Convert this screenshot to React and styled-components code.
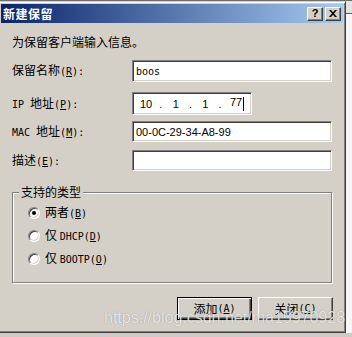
import React from 'react';
import styled, { createGlobalStyle } from 'styled-components';

const cjk = `"Noto Sans CJK SC", "Noto Sans", sans-serif`;
const mono = `"DejaVu Sans Mono", "Liberation Mono", monospace`;
const face = '#d4d0c8';

const GlobalStyle = createGlobalStyle`
  html, body { margin: 0; padding: 0; background: #f4f4f4; }
  body { font-family: ${cjk}; font-size: 12px; color: #000; }
`;

const Screen = styled.div`
  position: relative;
  width: 352px;
  height: 337px;
  overflow: hidden;
  background: linear-gradient(to bottom,
    #6f6f6f 0, #6f6f6f 1px,
    #e2e2e2 1px, #e2e2e2 13px,
    #5a5a5a 13px, #5a5a5a 14px,
    #f6f6f6 14px, #f6f6f6 333px,
    #cfcbc4 333px);
`;

const Dialog = styled.div`
  box-sizing: border-box;
  width: 348px;
  height: 332px;
  margin: 1px 0 0 -2px;
  padding: 2px;
  background: ${face};
  border: 1px solid;
  border-color: ${face} #404040 #404040 ${face};
  box-shadow: inset 1px 1px #fff, inset -1px -1px #808080;
  display: flex;
  flex-direction: column;
`;

const TitleBar = styled.div`
  height: 19px;
  display: flex;
  align-items: center;
  padding: 0 2px;
  background: linear-gradient(to right, #0a246a, #a6caf0);
`;

const TitleText = styled.div`
  flex: 1;
  color: #fff;
  font-weight: bold;
  font-size: 12px;
  letter-spacing: 0.5px;
  line-height: 19px;
`;

const CaptionButton = styled.div`
  box-sizing: border-box;
  width: 16px;
  height: 14px;
  margin-left: 2px;
  background: ${face};
  border: 1px solid;
  border-color: #fff #404040 #404040 #fff;
  box-shadow: inset -1px -1px #808080;
  display: flex;
  align-items: center;
  justify-content: center;
  font-family: "Liberation Sans", sans-serif;
  font-weight: bold;
  font-size: 11px;
  line-height: 1;
`;

const Body = styled.div`
  position: relative;
  flex: 1;
  display: flex;
  flex-direction: column;
  padding: 12px 11px 0 11px;
`;

const Intro = styled.div`
  height: 14px;
  line-height: 14px;
`;

const Form = styled.div`
  margin-top: 11px;
  display: flex;
  flex-direction: column;
`;

const Row = styled.div`
  display: grid;
  grid-template-columns: 120px auto;
  align-items: center;
  height: ${p => p.$h}px;
  margin-top: ${p => p.$top || 0}px;
`;

const Label = styled.div`
  line-height: 14px;
  white-space: nowrap;
`;

const Lat = styled.span`
  font-family: ${mono};
  font-size: 10px;
`;

const Edit = styled.div`
  box-sizing: border-box;
  width: ${p => p.$w}px;
  height: 100%;
  background: #fff;
  border: 1px solid;
  border-color: #808080 #fff #fff #808080;
  box-shadow: inset 1px 1px #404040, inset -1px -1px ${face};
  padding: 0 3px;
  display: flex;
  align-items: center;
  font-family: ${p => (p.$mono ? mono : '"Liberation Sans", Arial, sans-serif')};
  font-size: ${p => (p.$mono ? 10 : 11)}px;
  white-space: pre;
`;

const Octet = styled.span`
  width: 19px;
  text-align: ${p => p.$align || 'center'};
  padding-left: ${p => p.$pl || 0}px;
`;

const Dot = styled.span`
  width: 12px;
  text-align: center;
`;

const Caret = styled.span`
  display: inline-block;
  width: 1px;
  height: 14px;
  vertical-align: middle;
  background: #000;
  margin-left: 1px;
`;

const Group = styled.div`
  position: relative;
  box-sizing: border-box;
  margin-top: 21px;
  height: 91px;
  border: 1px solid #808080;
  box-shadow: inset 1px 1px #fff, 1px 1px #fff;
  padding: 8px 0 0 15px;
`;

const Legend = styled.div`
  position: absolute;
  top: -8px;
  left: 6px;
  padding: 0 2px;
  background: ${face};
  line-height: 14px;
`;

const Option = styled.div`
  height: 23px;
  display: flex;
  align-items: center;
  gap: 5px;
  line-height: 14px;
`;

const Radio = styled.span`
  box-sizing: border-box;
  width: 12px;
  height: 12px;
  border-radius: 50%;
  background: #fff;
  border: 1px solid;
  border-color: #808080 #fff #fff #808080;
  box-shadow: inset 1px 1px #404040, inset -1px -1px ${face};
  display: flex;
  align-items: center;
  justify-content: center;

  &::after {
    content: '';
    width: 4px;
    height: 4px;
    border-radius: 50%;
    background: ${p => (p.$checked ? '#000' : 'transparent')};
  }
`;

const Buttons = styled.div`
  margin-top: 14px;
  margin-right: -1px;
  display: flex;
  justify-content: flex-end;
  gap: 6px;
`;

const Button = styled.div`
  box-sizing: border-box;
  width: 75px;
  height: 23px;
  background: ${face};
  border: 1px solid;
  border-color: ${p => (p.$default ? '#000' : '#fff #404040 #404040 #fff')};
  box-shadow: ${p =>
    p.$default
      ? 'inset 1px 1px #fff, inset -1px -1px #404040, inset -2px -2px #808080'
      : 'inset -1px -1px #808080'};
  display: flex;
  align-items: center;
  justify-content: center;
  line-height: 14px;
`;

const Watermark = styled.div`
  position: absolute;
  left: 103px;
  top: 286px;
  font-family: "Liberation Sans", Arial, sans-serif;
  font-size: 16px;
  line-height: 18px;
  color: rgba(255, 255, 255, 0.8);
  text-shadow: 0 0 1px rgba(0, 0, 0, 0.4);
  white-space: nowrap;
  pointer-events: none;
`;

const Acc = ({ k }) => (
  <Lat>
    (<u>{k}</u>)
  </Lat>
);

const CloseGlyph = () => (
  <svg width="8" height="7" viewBox="0 0 8 7">
    <path d="M0 0h2l2 2.2L6 0h2L5 3.5 8 7H6L4 4.8 2 7H0l3-3.5z" fill="#000" />
  </svg>
);

export default function App() {
  return (
    <Screen>
      <GlobalStyle />
      <Dialog>
        <TitleBar>
          <TitleText>新建保留</TitleText>
          <CaptionButton>?</CaptionButton>
          <CaptionButton>
            <CloseGlyph />
          </CaptionButton>
        </TitleBar>
        <Body>
          <Intro>为保留客户端输入信息。</Intro>
          <Form>
            <Row $h={22}>
              <Label>
                保留名称<Acc k="R" />
                <Lat>:</Lat>
              </Label>
              <Edit $w={200} $mono>boos</Edit>
            </Row>
            <Row $h={23} $top={10}>
              <Label>
                <Lat>IP </Lat>地址<Acc k="P" />
                <Lat>:</Lat>
              </Label>
              <Edit $w={120}>
                <Octet $pl={1}>10</Octet>
                <Dot>.</Dot>
                <Octet>1</Octet>
                <Dot>.</Dot>
                <Octet>1</Octet>
                <Dot>.</Dot>
                <Octet $align="left" $pl={4}>
                  77<Caret />
                </Octet>
              </Edit>
            </Row>
            <Row $h={21} $top={6}>
              <Label>
                <Lat>MAC </Lat>地址<Acc k="M" />
                <Lat>:</Lat>
              </Label>
              <Edit $w={200}>00-0C-29-34-A8-99</Edit>
            </Row>
            <Row $h={21} $top={8}>
              <Label>
                描述<Acc k="E" />
                <Lat>:</Lat>
              </Label>
              <Edit $w={200} />
            </Row>
          </Form>
          <Group>
            <Legend>支持的类型</Legend>
            <Option>
              <Radio $checked />
              <span>
                两者<Acc k="B" />
              </span>
            </Option>
            <Option>
              <Radio />
              <span>
                仅 <Lat>DHCP</Lat>
                <Acc k="D" />
              </span>
            </Option>
            <Option>
              <Radio />
              <span>
                仅 <Lat>BOOTP</Lat>
                <Acc k="O" />
              </span>
            </Option>
          </Group>
          <Buttons>
            <Button $default>
              添加<Acc k="A" />
            </Button>
            <Button>
              关闭<Acc k="C" />
            </Button>
          </Buttons>
          <Watermark>https://blog.csdn.net/ma15970928</Watermark>
        </Body>
      </Dialog>
    </Screen>
  );
}
